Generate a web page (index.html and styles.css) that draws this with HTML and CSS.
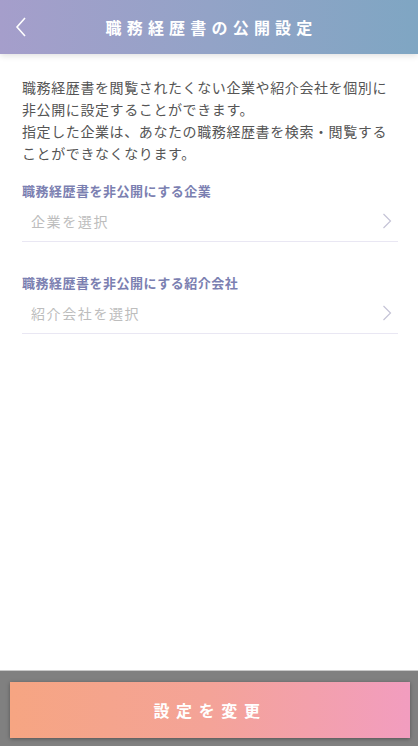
FILE: index.html
```html
<!DOCTYPE html>
<html lang="ja">
<head>
<meta charset="utf-8">
<link rel="stylesheet" href="styles.css">
</head>
<body>
<div class="page">
  <header class="header">
    <span class="back">
      <svg width="14" height="22" viewBox="0 0 14 22"><path d="M11 2 L3 11 L11 20" fill="none" stroke="#fff" stroke-width="1.6"/></svg>
    </span>
    <h1 class="title">職務経歴書の公開設定</h1>
  </header>
  <main class="content">
    <p class="intro">職務経歴書を閲覧されたくない企業や紹介会社を個別に非公開に設定することができます。<br>指定した企業は、あなたの職務経歴書を検索・閲覧することができなくなります。</p>
    <section class="field">
      <div class="label">職務経歴書を非公開にする企業</div>
      <div class="select">
        <span class="placeholder">企業を選択</span>
        <svg class="chev" width="10" height="16" viewBox="0 0 10 16"><path d="M1.5 1 L8.5 8 L1.5 15" fill="none" stroke="#c4c3d6" stroke-width="1.2"/></svg>
      </div>
    </section>
    <section class="field second">
      <div class="label">職務経歴書を非公開にする紹介会社</div>
      <div class="select">
        <span class="placeholder">紹介会社を選択</span>
        <svg class="chev" width="10" height="16" viewBox="0 0 10 16"><path d="M1.5 1 L8.5 8 L1.5 15" fill="none" stroke="#c4c3d6" stroke-width="1.2"/></svg>
      </div>
    </section>
  </main>
  <footer class="footer">
    <button class="submit">設定を変更</button>
  </footer>
</div>
</body>
</html>
```
FILE: styles.css
```css
html, body {
  margin: 0;
  padding: 0;
  background: #fff;
}
body {
  font-family: "Noto Sans CJK JP", "Noto Sans", sans-serif;
}
.page {
  display: flex;
  flex-direction: column;
  height: 746px;
  width: 418px;
}
.header {
  position: relative;
  height: 54px;
  display: flex;
  align-items: center;
  justify-content: center;
  background: linear-gradient(90deg, #a59ecb 0%, #93a3c7 50%, #7fa6c3 100%);
  box-shadow: 0 2px 6px rgba(0, 0, 0, 0.12);
  flex-shrink: 0;
  z-index: 1;
}
.back {
  position: absolute;
  left: 14px;
  top: 16px;
  display: flex;
}
.title {
  margin: 0 0 0 5px;
  color: #fff;
  font-size: 16px;
  font-weight: 700;
  letter-spacing: 5.2px;
  line-height: 1;
}
.content {
  flex: 1;
  padding: 22px 20px 0 22px;
}
.intro {
  margin: 0;
  color: #555;
  font-size: 14px;
  line-height: 22px;
  letter-spacing: 0.6px;
}
.field {
  margin-top: 17px;
}
.field.second {
  margin-top: 31px;
}
.label {
  color: #7b80b1;
  font-size: 13px;
  font-weight: 700;
  line-height: 20px;
  letter-spacing: 0.5px;
}
.select {
  height: 40px;
  display: flex;
  align-items: center;
  justify-content: space-between;
  padding: 0 6px 0 9px;
  border-bottom: 1px solid #e9e7f3;
}
.placeholder {
  color: #bdbdbd;
  font-size: 14px;
  letter-spacing: 1.6px;
}
.footer {
  box-sizing: border-box;
  height: 76px;
  flex-shrink: 0;
  background: #808080;
  border-top: 1px solid #c9c9c9;
  padding: 11px 8px 8px 10px;
  display: flex;
}
.submit {
  flex: 1;
  border: none;
  margin: 0;
  background: linear-gradient(90deg, #f6a582 0%, #f4a398 50%, #f29dbf 100%);
  box-shadow: 0 1px 4px rgba(0, 0, 0, 0.35);
  color: #fff;
  font-family: "Noto Sans CJK JP", sans-serif;
  font-size: 16px;
  font-weight: 700;
  letter-spacing: 6.6px;
  padding-left: 6px;
}
```
